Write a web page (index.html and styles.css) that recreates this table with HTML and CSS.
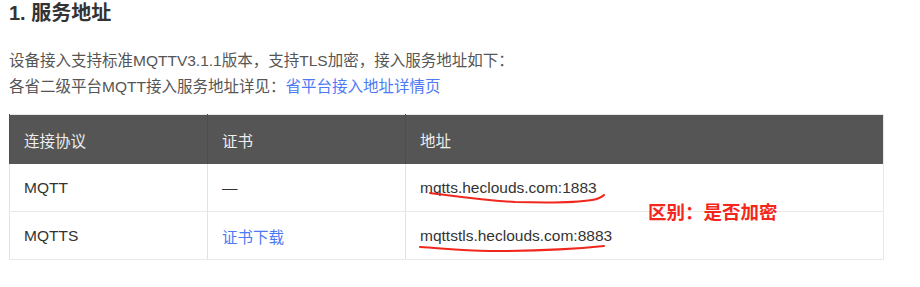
FILE: index.html
```html
<!DOCTYPE html>
<html lang="zh-CN">
<head>
<meta charset="utf-8">
<link rel="stylesheet" href="styles.css">
</head>
<body>
<div class="page">
  <h3 class="title">1. 服务地址</h3>
  <p class="desc">设备接入支持标准MQTTV3.1.1版本，支持TLS加密，接入服务地址如下：<br>各省二级平台MQTT接入服务地址详见：<a class="link" href="#">省平台接入地址详情页</a></p>
  <table class="tbl">
    <colgroup><col class="c1"><col class="c2"><col class="c3"></colgroup>
    <thead>
      <tr><th>连接协议</th><th>证书</th><th>地址</th></tr>
    </thead>
    <tbody>
      <tr><td>MQTT</td><td>—</td><td>mqtts.heclouds.com:1883</td></tr>
      <tr class="r2"><td>MQTTS</td><td><a class="link" href="#">证书下载</a></td><td>mqttstls.heclouds.com:8883</td></tr>
    </tbody>
  </table>
  <svg class="marks" width="920" height="287" viewBox="0 0 920 287">
    <path d="M430 193 C 455 196, 480 200, 515 202 C 550 203, 580 202, 592 200 C 598 199, 601 198, 604 195" fill="none" stroke="#f0271d" stroke-width="2" stroke-linecap="round"/>
    <path d="M420 247 C 440 248, 460 251, 490 251 C 530 251, 575 249, 604 246" fill="none" stroke="#f0271d" stroke-width="2" stroke-linecap="round"/>
  </svg>
  <div class="note">区别：是否加密</div>
</div>
</body>
</html>
```
FILE: styles.css
```css
html, body {
  margin: 0;
  padding: 0;
  background: #fff;
}
.page {
  position: relative;
  width: 920px;
  height: 287px;
  padding-left: 9px;
  box-sizing: border-box;
  font-family: "Liberation Sans", "Noto Sans CJK SC", sans-serif;
  color: #555;
}
.title {
  margin: 0;
  font-size: 20px;
  line-height: 26px;
  font-weight: bold;
  color: #333;
}
.desc {
  margin: 22px 0 0;
  font-size: 15.5px;
  line-height: 26px;
  color: #555;
}
.link {
  color: #4c7af5;
  text-decoration: none;
}
.tbl {
  margin-top: 14px;
  width: 875px;
  border-collapse: collapse;
  border: 1px solid #e8e8e8;
  font-size: 15.5px;
  table-layout: fixed;
}
.c1 { width: 198px; }
.c2 { width: 198px; }
.tbl th {
  background: #555;
  color: #eee;
  font-weight: normal;
  text-align: left;
  height: 49px;
  padding: 0 0 0 14px;
  border-left: 1px solid #4d4d4d;
}
.tbl td {
  height: 47px;
  padding: 0 0 0 14px;
  color: #333;
  border-left: 1px solid #e3e3e3;
  border-bottom: 1px solid #e8e8e8;
}
.marks {
  position: absolute;
  left: 0;
  top: 0;
  pointer-events: none;
}
.note {
  position: absolute;
  left: 648px;
  top: 198px;
  font-size: 18.5px;
  line-height: 26px;
  font-weight: bold;
  color: #f5261b;
  font-family: "Noto Sans CJK SC", sans-serif;
}
```
